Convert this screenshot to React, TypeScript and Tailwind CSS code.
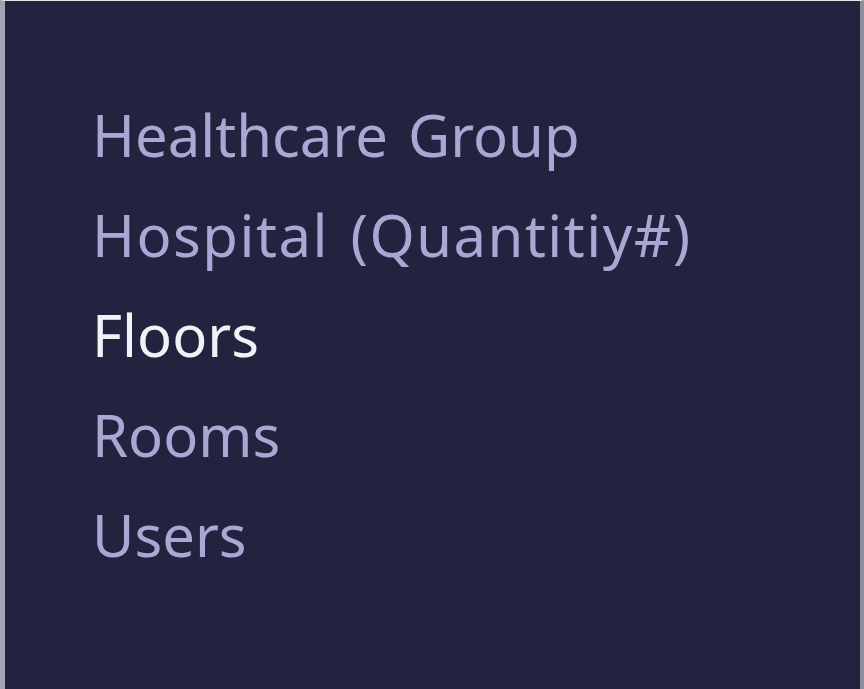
export default function App() {
  const items = [
    { name: "Healthcare Group", active: false },
    { name: "Hospital (Quantitiy#)", active: false },
    { name: "Floors", active: true },
    { name: "Rooms", active: false },
    { name: "Users", active: false },
  ];

  return (
    <div className="h-screen w-full bg-[#22233f] border-t border-t-[#e6e6ea] border-l-[5px] border-l-[#a3a3b3] border-r-4 border-r-[#8e8e9c] overflow-hidden">
      <nav className="pt-[84px] pl-[87px] flex flex-col">
        {items.map((item) => (
          <a
            key={item.name}
            className={`block text-[58px] leading-[100px] [word-spacing:5px] font-['Noto_Sans',sans-serif] ${
              item.active ? "text-[#f2f2f6]" : "text-[#a9a7d3]"
            } ${item.name.includes("(") ? "tracking-[1.5px]" : ""}`}
          >
            {item.name}
          </a>
        ))}
      </nav>
    </div>
  );
}
